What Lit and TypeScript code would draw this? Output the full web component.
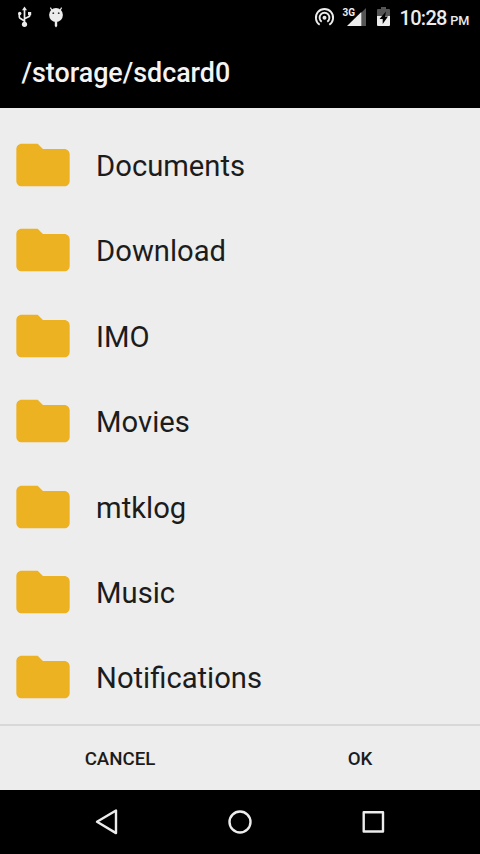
import { LitElement, html, css } from "lit";
import { customElement } from "lit/decorators.js";

@customElement("status-bar")
class StatusBar extends LitElement {
  static styles = css`
    :host { display: flex; height: 36px; background: #000; color: #ececec; }
    svg { display: block; flex: none; }
    .left { width: 300px; }
    .right { width: 96px; }
    .clock { font: 500 20px/36px Roboto, sans-serif; letter-spacing: -0.7px; white-space: nowrap; padding-left: 3.5px; }
    .pm { font-size: 12.7px; letter-spacing: -0.2px; margin-left: 3.5px; }
    .net { font: 700 11.5px Roboto, sans-serif; }
  `;
  render() {
    return html`
      <svg class="left" viewBox="0 0 300 36" height="36" fill="#ececec">
        <path d="M24.500 9v15M24.500 21l-4.400-2.800q-.8-.5-.8-1.400V13.500M24.500 18.800l4.600-2.200q.6-.4.6-1.200V13.500" fill="none" stroke="#ececec" stroke-width="1.700" />
        <path d="M24.500 6.500l2.500 3.700h-5z" />
        <circle cx="19.700" cy="13.500" r="1.700" />
        <path d="M28 12h3.200v3.200h-3.200z" />
        <circle cx="24.500" cy="24.300" r="2.600" />
        <path d="M52 10.500l-1.600-2.900M60 10.500l1.600-2.900" stroke="#ececec" stroke-width="1.200" />
        <ellipse cx="56" cy="15" rx="6.900" ry="6.900" />
        <path d="M54.800 20h2.400v6l-1.200 1.500-1.200-1.500z" />
        <circle cx="53.300" cy="13.200" r=".9" fill="#333" />
        <circle cx="58.700" cy="13.200" r=".9" fill="#333" />
      </svg>
      <svg class="right" viewBox="300 0 96 36" height="36" fill="#ececec">
        <g fill="none" stroke="#ececec" stroke-width="1.900">
          <path d="M319.700 24.800a8.600 8.600 0 1 1 9.600 0" />
          <path d="M321.700 21.700a4.900 4.900 0 1 1 5.600 0" />
        </g>
        <circle cx="324.500" cy="17.800" r="2" />
        <path d="M366 8v18h-18z" fill="#555" />
        <path d="M361.300 12v14h-14.300z" />
        <path d="M342 7h13v9h-13z" fill="#000" />
        <text class="net" x="342.500" y="16" textLength="12.500" lengthAdjust="spacingAndGlyphs">3G</text>
        <path d="M381 7h5v2h3q1 0 1 1v7h-13v-7q0-1 1-1h3z" fill="#555" />
        <path d="M377 16h13v9q0 1-1 1h-11q-1 0-1-1z" />
        <path d="M386 11.500l-6.500 7.500h3.200v5l5.300-7.500h-3z" fill="#000" />
      </svg>
      <span class="clock">10:28<span class="pm">PM</span></span>
    `;
  }
}

@customElement("folder-row")
class FolderRow extends LitElement {
  static properties = { name: {} };
  declare name: string;
  static styles = css`
    :host { display: flex; align-items: center; height: 85.400px; padding-left: 10.600px; box-sizing: border-box; }
    svg { width: 64px; height: 64px; fill: #edb222; flex: none; }
    .name { font: 400 29.200px/40px Roboto, sans-serif; color: #1c1c1c; margin-left: 21.500px; padding-top: 2px; }
  `;
  render() {
    return html`
      <svg viewBox="0 0 24 24"><path d="M10 4H4c-1.100 0-2 .9-2 2v12c0 1.100.9 2 2 2h16c1.100 0 2-.9 2-2V8c0-1.100-.9-2-2-2h-8z" /></svg>
      <span class="name">${this.name}</span>
    `;
  }
}

@customElement("nav-bar")
class NavBar extends LitElement {
  static styles = css`
    :host { display: flex; height: 64px; background: #000; }
    svg { display: block; fill: none; stroke: #ececec; stroke-width: 2.400; stroke-linejoin: round; }
  `;
  render() {
    return html`
      <svg width="480" height="64" viewBox="0 790 480 64">
        <path d="M97 821.800l19-11.300v22.600z" />
        <circle cx="240" cy="822" r="10.500" />
        <path d="M363.700 812.200h19.300v19.300h-19.300z" />
      </svg>
    `;
  }
}

@customElement("app-root")
class AppRoot extends LitElement {
  static styles = css`
    :host { display: flex; flex-direction: column; width: 480px; height: 854px; overflow: hidden; background: #ededed; font-family: Roboto, sans-serif; }
    .title { height: 72px; background: #000; color: #f4f4f4; font: 500 26.850px/74px Roboto, sans-serif; padding-left: 21.500px; box-sizing: border-box; }
    .list { height: 616px; padding-top: 14.400px; box-sizing: border-box; overflow: hidden; }
    .actions { display: flex; height: 66px; box-sizing: border-box; border-top: 2px solid #d8d8d8; }
    .action { flex: 1; text-align: center; font: 500 18.700px/67px Roboto, sans-serif; color: #1c1c1c; }
  `;
  folders = ["Documents", "Download", "IMO", "Movies", "mtklog", "Music", "Notifications"];
  render() {
    return html`
      <status-bar></status-bar>
      <div class="title">/storage/sdcard0</div>
      <div class="list">${this.folders.map((f) => html`<folder-row .name=${f}></folder-row>`)}</div>
      <div class="actions">
        <div class="action">CANCEL</div>
        <div class="action">OK</div>
      </div>
      <nav-bar></nav-bar>
    `;
  }
}
